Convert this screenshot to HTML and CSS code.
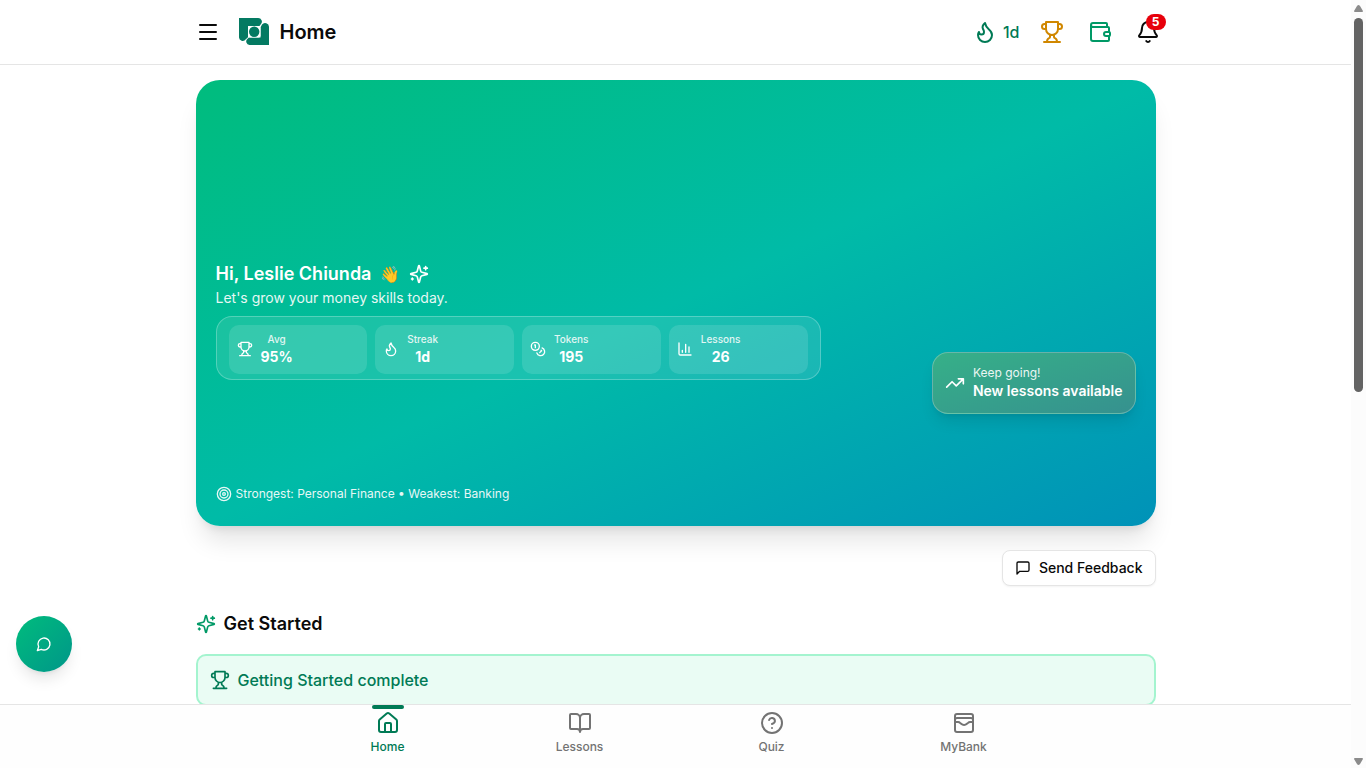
FILE: index.html
```html
<!DOCTYPE html>
<html lang="en">
<head>
<meta charset="utf-8">
<meta name="viewport" content="width=device-width, initial-scale=1">
<title>Home</title>
<link rel="stylesheet" href="styles.css">
</head>
<body>
<svg class="sprite" aria-hidden="true">
  <symbol id="trophy" viewBox="0 0 24 24"><path d="M6 9H4.5a2.5 2.5 0 0 1 0-5H6M18 9h1.5a2.5 2.5 0 0 0 0-5H18M4 22h16M10 14.66V17c0 .55-.47.98-.97 1.21C7.85 18.75 7 20.24 7 22M14 14.66V17c0 .55.47.98.97 1.21C16.15 18.75 17 20.24 17 22M18 2H6v7a6 6 0 0 0 12 0V2Z"/></symbol>
  <symbol id="flame" viewBox="0 0 24 24"><path d="M8.5 14.5A2.5 2.5 0 0 0 11 12c0-1.38-.5-2-1-3-1.072-2.143-.224-4.054 2-6 .5 2.5 2 4.9 4 6.5 2 1.6 3 3.5 3 5.5a7 7 0 1 1-14 0c0-1.153.433-2.294 1-3a2.5 2.5 0 0 0 2.5 2.5z"/></symbol>
  <symbol id="sparkles" viewBox="0 0 24 24"><path d="M9.937 15.5A2 2 0 0 0 8.5 14.063l-6.135-1.582a.5.5 0 0 1 0-.962L8.5 9.936A2 2 0 0 0 9.937 8.5l1.582-6.135a.5.5 0 0 1 .963 0L14.063 8.5A2 2 0 0 0 15.5 9.937l6.135 1.581a.5.5 0 0 1 0 .964L15.5 14.063a2 2 0 0 0-1.437 1.437l-1.582 6.135a.5.5 0 0 1-.963 0zM20 3v4M22 5h-4M4 17v2M5 18H3"/></symbol>
</svg>
<div class="shell">
  <div class="page">
    <header class="topbar">
      <div class="container topbar-row">
        <div class="brand">
          <button class="icon-button" type="button" aria-label="Open menu"><svg class="icon" viewBox="0 0 24 24"><path d="M4 5h16M4 12h16M4 19h16"/></svg></button>
          <svg class="logo" viewBox="0 0 30 28" aria-hidden="true">
            <path d="M0 0h19.200a3.700 3.700 0 0 1 2.600 6.300L20.500 8H9v11.200l-2.200 2A3.700 3.700 0 0 1 0 19z"/>
            <path class="logo-front" d="M30 27H10.500a3.500 3.500 0 0 1-2-6.200L10 19.500H21.500V9.500L23 6.500a3.900 3.900 0 0 1 7 2.300z"/>
            <rect class="logo-gap" x="9" y="8" width="12.500" height="11.500" rx="2"/>
            <circle cx="15.200" cy="13.700" r="5.200"/>
          </svg>
          <h1 class="page-title">Home</h1>
        </div>
        <div class="actions">
          <button class="icon-button streak" type="button" aria-label="Streak, 1 day"><svg class="icon"><use href="#flame"/></svg><span>1d</span></button>
          <button class="icon-button gold" type="button" aria-label="Leaderboard"><svg class="icon"><use href="#trophy"/></svg></button>
          <button class="icon-button green" type="button" aria-label="Wallet"><svg class="icon" viewBox="0 0 24 24"><path d="M19 7V4a1 1 0 0 0-1-1H5a2 2 0 0 0 0 4h15a1 1 0 0 1 1 1v4h-3a2 2 0 0 0 0 4h3a1 1 0 0 0 1-1v-2a1 1 0 0 0-1-1M3 5v14a2 2 0 0 0 2 2h15a1 1 0 0 0 1-1v-4"/></svg></button>
          <button class="icon-button bell" type="button" aria-label="Notifications"><svg class="icon" viewBox="0 0 24 24"><path d="M10.268 21a2 2 0 0 0 3.464 0M3.262 15.326A1 1 0 0 0 4 17h16a1 1 0 0 0 .74-1.673C19.410 13.956 18 12.499 18 8A6 6 0 0 0 6 8c0 4.499-1.411 5.956-2.738 7.326"/></svg><span class="badge">5</span></button>
        </div>
      </div>
    </header>

    <main class="main">
      <div class="container stack">
        <section class="hero">
          <div class="hero-info">
            <div class="greeting">
              <h2>Hi, Leslie Chiunda</h2>
              <span class="wave">👋</span>
              <svg class="icon md"><use href="#sparkles"/></svg>
            </div>
            <p class="tagline">Let's grow your money skills today.</p>
            <div class="stats">
              <div class="stat"><svg class="icon sm"><use href="#trophy"/></svg><div class="stat-text"><span>Avg</span><strong>95%</strong></div></div>
              <div class="stat"><svg class="icon sm"><use href="#flame"/></svg><div class="stat-text"><span>Streak</span><strong>1d</strong></div></div>
              <div class="stat"><svg class="icon sm" viewBox="0 0 24 24"><circle cx="8" cy="8" r="6"/><path d="M18.090 10.370A6 6 0 1 1 10.340 18M7 6h1v4M16.710 13.880l.7.710-2.820 2.820"/></svg><div class="stat-text"><span>Tokens</span><strong>195</strong></div></div>
              <div class="stat"><svg class="icon sm" viewBox="0 0 24 24"><path d="M3 3v16a2 2 0 0 0 2 2h16M18 17V9M13 17V5M8 17v-3"/></svg><div class="stat-text"><span>Lessons</span><strong>26</strong></div></div>
            </div>
            <p class="insight"><svg class="icon sm" viewBox="0 0 24 24"><circle cx="12" cy="12" r="10"/><circle cx="12" cy="12" r="6"/><circle cx="12" cy="12" r="2"/></svg><span>Strongest: Personal Finance • Weakest: Banking</span></p>
          </div>
          <div class="promo">
            <svg class="icon md" viewBox="0 0 24 24"><path d="M16 7h6v6M22 7l-8.500 8.500-5-5L2 17"/></svg>
            <div class="promo-text"><span>Keep going!</span><strong>New lessons available</strong></div>
          </div>
        </section>

        <button class="feedback" type="button"><svg class="icon sm" viewBox="0 0 24 24"><path d="M21 15a2 2 0 0 1-2 2H7l-4 4V5a2 2 0 0 1 2-2h14a2 2 0 0 1 2 2z"/></svg>Send Feedback</button>

        <section class="started">
          <h2 class="section-title"><svg class="icon md green"><use href="#sparkles"/></svg>Get Started</h2>
          <div class="complete"><svg class="icon md"><use href="#trophy"/></svg><span>Getting Started complete</span></div>
        </section>
      </div>
    </main>

    <nav class="tabs" aria-label="Main">
      <div class="tabs-row">
        <a class="tab active" href="#home" aria-current="page"><svg class="icon" viewBox="0 0 24 24"><path d="M15 21v-8a1 1 0 0 0-1-1h-4a1 1 0 0 0-1 1v8M3 10a2 2 0 0 1 .709-1.528l7-5.999a2 2 0 0 1 2.582 0l7 5.999A2 2 0 0 1 21 10v9a2 2 0 0 1-2 2H5a2 2 0 0 1-2-2z"/></svg>Home</a>
        <a class="tab" href="#lessons"><svg class="icon" viewBox="0 0 24 24"><path d="M12 7v14M3 18a1 1 0 0 1-1-1V4a1 1 0 0 1 1-1h5a4 4 0 0 1 4 4 4 4 0 0 1 4-4h5a1 1 0 0 1 1 1v13a1 1 0 0 1-1 1h-6a3 3 0 0 0-3 3 3 3 0 0 0-3-3z"/></svg>Lessons</a>
        <a class="tab" href="#quiz"><svg class="icon" viewBox="0 0 24 24"><circle cx="12" cy="12" r="10"/><path d="M9.090 9a3 3 0 0 1 5.830 1c0 2-3 3-3 3M12 17h.01"/></svg>Quiz</a>
        <a class="tab" href="#mybank"><svg class="icon" viewBox="0 0 24 24"><rect width="18" height="18" x="3" y="3" rx="2"/><path d="M3 9a2 2 0 0 1 2-2h14a2 2 0 0 1 2 2M3 11h3c.8 0 1.600.3 2.100.9l1.100.9c1.600 1.600 4.100 1.600 5.700 0l1.100-.9c.5-.5 1.300-.9 2.100-.9H21"/></svg>MyBank</a>
      </div>
    </nav>
  </div>
  <div class="scrollbar" aria-hidden="true">
    <svg class="arrow" viewBox="0 0 9 8"><path d="M4.500 0Q5.300 0 6 1L8.700 5.500Q9.500 7 8 7H1Q-.5 7 .3 5.500L3 1Q3.700 0 4.500 0z"/></svg>
    <div class="track"><div class="thumb"></div></div>
    <svg class="arrow down" viewBox="0 0 9 8"><path d="M4.500 0Q5.300 0 6 1L8.700 5.500Q9.500 7 8 7H1Q-.5 7 .3 5.500L3 1Q3.700 0 4.500 0z"/></svg>
  </div>
</div>
<button class="chat" type="button" aria-label="Open chat"><svg class="icon sm" viewBox="0 0 24 24"><path d="M7.900 20A9 9 0 1 0 4 16.100L2 22Z"/></svg></button>
</body>
</html>
```
FILE: styles.css
```css
* { box-sizing: border-box; }

body {
  margin: 0;
  background: #fff;
  color: #0a0a0a;
  font-family: Inter, "Liberation Sans", sans-serif;
  font-size: 16px;
  line-height: 24px;
}

h1, h2, p { margin: 0; }
button { font: inherit; color: inherit; background: none; border: 0; padding: 0; cursor: pointer; }
a { color: inherit; text-decoration: none; }

.sprite { display: none; }
.icon {
  display: block;
  flex: none;
  width: 24px;
  height: 24px;
  fill: none;
  stroke: currentColor;
  stroke-width: 2;
  stroke-linecap: round;
  stroke-linejoin: round;
}
.icon.md { width: 20px; height: 20px; }
.icon.sm { width: 16px; height: 16px; }
.green { color: #009966; }
.gold { color: #d08700; }

.shell { display: grid; grid-template-columns: 1fr 15px; height: 100vh; overflow: hidden; }
.page { display: flex; flex-direction: column; min-width: 0; min-height: 0; }
.container { width: 100%; max-width: 960px; margin: 0 auto; }

/* Top bar */
.topbar { flex: none; border-bottom: 1px solid #e5e5e5; }
.topbar-row { display: flex; align-items: center; justify-content: space-between; height: 64px; }
.brand { display: flex; align-items: center; }
.icon-button { display: flex; align-items: center; }
.logo { width: 30px; height: 28px; margin-left: 19px; fill: #047a62; }
.logo-front { stroke: #fff; stroke-width: 1; paint-order: stroke; }
.logo-gap { fill: #fff; }
.page-title { margin-left: 11px; font-size: 20px; line-height: 28px; font-weight: 600; }
.actions { display: flex; align-items: center; gap: 24px; margin-right: -4px; }
.actions .streak { gap: 6px; margin-right: -4px; color: #007a55; font-weight: 500; }
.bell { position: relative; }
.badge {
  position: absolute;
  top: -6px;
  right: -6px;
  width: 20px;
  height: 16px;
  border-radius: 8px;
  background: #e7000b;
  color: #fff;
  font-size: 12px;
  line-height: 16px;
  font-weight: 700;
  text-align: center;
}

/* Main column */
.main { flex: 1; min-height: 0; overflow: hidden; padding-top: 15px; }
.stack { display: flex; flex-direction: column; }

.hero {
  display: flex;
  align-items: center;
  justify-content: space-between;
  padding: 180px 20px 20px;
  border-radius: 24px;
  background: linear-gradient(to bottom right in oklab, #00bc7d, #00bba7, #0092b8);
  box-shadow: 0 20px 25px -5px rgba(0, 0, 0, 0.1), 0 8px 10px -6px rgba(0, 0, 0, 0.1);
  color: #fff;
}
.hero-info { flex: 0 1 605px; }
.greeting { display: flex; align-items: center; gap: 9px; }
.greeting h2 { font-size: 18px; line-height: 28px; font-weight: 600; }
.wave { font-size: 16px; }
.tagline { font-size: 14px; line-height: 20px; opacity: 0.9; }
.stats {
  display: grid;
  grid-template-columns: repeat(4, 1fr);
  gap: 8px;
  margin-top: 8px;
  padding: 8px 12px 5px;
  border: 1px solid rgba(255, 255, 255, 0.25);
  border-radius: 16px;
  background: rgba(255, 255, 255, 0.1);
}
.stat {
  display: flex;
  align-items: center;
  gap: 8px;
  padding: 6px 8px 8px;
  border-radius: 10px;
  background: rgba(255, 255, 255, 0.12);
}
.stat-text { display: flex; flex-direction: column; align-items: center; }
.stat-text span { font-size: 10px; line-height: 16px; font-weight: 500; opacity: 0.85; }
.stat-text strong { font-size: 14px; line-height: 19px; font-weight: 700; }
.insight {
  display: flex;
  align-items: center;
  gap: 4px;
  margin-top: 106px;
  padding-bottom: 4px;
  font-size: 12px;
  line-height: 16px;
  opacity: 0.9;
}

.promo {
  display: flex;
  align-items: center;
  gap: 8px;
  padding: 12px;
  border: 1px solid rgba(255, 255, 255, 0.25);
  border-radius: 16px;
  background: linear-gradient(to bottom right, #36b088, #36918f);
  box-shadow: 0 10px 15px -3px rgba(0, 0, 0, 0.1), 0 4px 6px -4px rgba(0, 0, 0, 0.1);
}
.promo-text { display: flex; flex-direction: column; }
.promo-text span { font-size: 12px; line-height: 16px; opacity: 0.9; }
.promo-text strong { font-size: 14px; line-height: 20px; font-weight: 600; }

.feedback {
  display: flex;
  align-items: center;
  align-self: flex-end;
  gap: 8px;
  height: 36px;
  margin-top: 24px;
  padding: 0 12px;
  border: 1px solid #e5e5e5;
  border-radius: 8px;
  background: #fff;
  box-shadow: 0 1px 2px rgba(0, 0, 0, 0.05);
  font-size: 14px;
  font-weight: 500;
}

.started { margin-top: 24px; }
.section-title { display: flex; align-items: center; gap: 8px; font-size: 18px; line-height: 28px; font-weight: 600; }
.complete {
  display: flex;
  align-items: center;
  gap: 8px;
  margin-top: 16px;
  padding: 12px;
  border: 2px solid #a4f4cf;
  border-radius: 10px;
  background: #eafcf4;
  color: #007a55;
  font-weight: 500;
}

/* Bottom tabs */
.tabs { flex: none; border-top: 1px solid #e5e5e5; background: #fefefe; }
.tabs-row { display: grid; grid-template-columns: repeat(4, 1fr); max-width: 768px; height: 63px; margin: 0 auto; }
.tab {
  position: relative;
  display: flex;
  flex-direction: column;
  align-items: center;
  gap: 4px;
  padding-top: 6px;
  color: #737373;
  font-size: 12px;
  line-height: 16px;
  font-weight: 500;
}
.tab.active { color: #007a55; }
.tab.active::before {
  content: "";
  position: absolute;
  top: 0;
  left: 50%;
  width: 32px;
  height: 4px;
  margin-left: -16px;
  border-radius: 2px;
  background: currentColor;
}

/* Floating chat button */
.chat {
  position: fixed;
  left: 16px;
  bottom: 96px;
  display: grid;
  place-items: center;
  width: 56px;
  height: 56px;
  border-radius: 50%;
  background: linear-gradient(to bottom right, #00bc7d, #009689);
  box-shadow: 0 10px 15px -3px rgba(0, 0, 0, 0.1), 0 4px 6px -4px rgba(0, 0, 0, 0.1);
  color: #fff;
}

/* Scroll track */
.scrollbar { display: flex; flex-direction: column; align-items: center; padding: 5px 0 3px; background: #fcfcfc; }
.arrow { flex: none; width: 9px; height: 8px; fill: #8b8b8b; }
.arrow.down { transform: rotate(180deg); }
.track { flex: 1; padding: 5px 0; }
.thumb { width: 9px; height: 51%; border-radius: 5px; background: #636363; }
```
